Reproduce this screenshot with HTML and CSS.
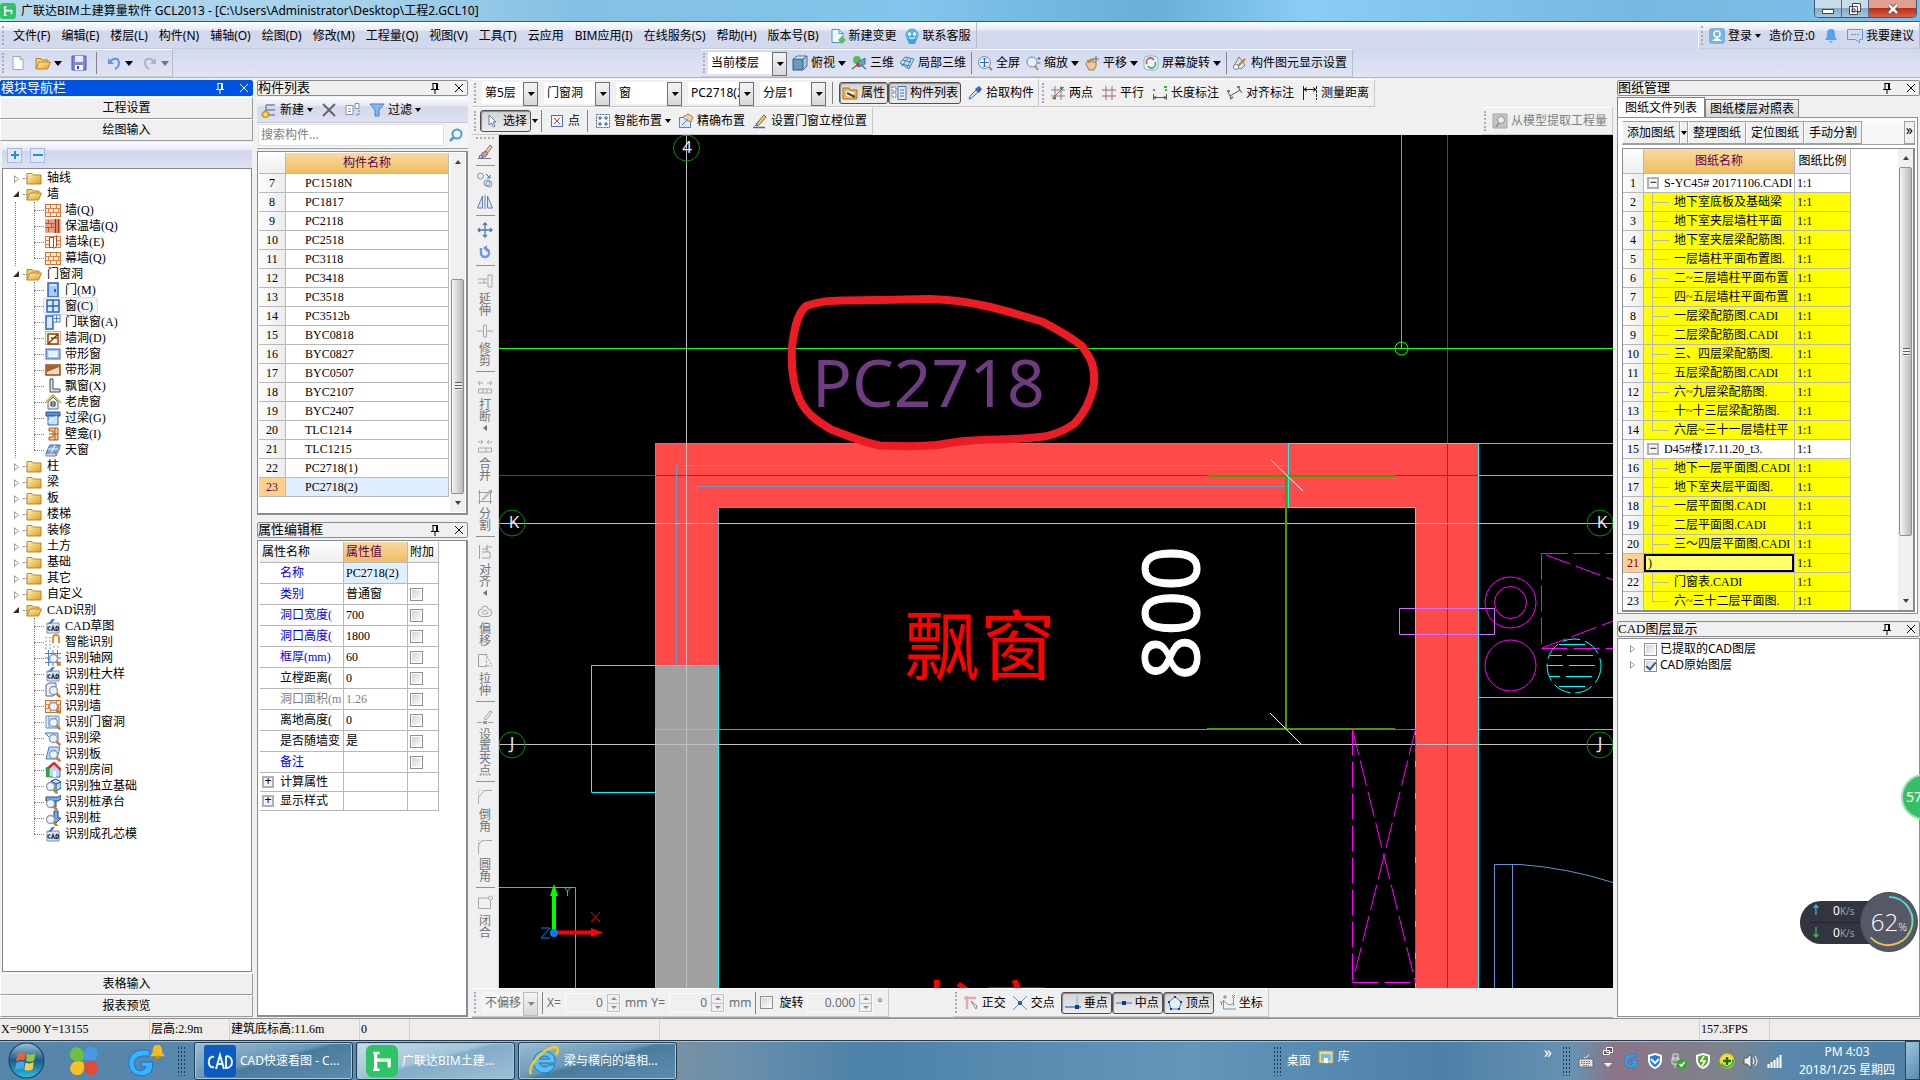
FILE: index.html
```html
<!DOCTYPE html>
<html lang="zh-CN">
<head>
<meta charset="utf-8">
<title>广联达BIM土建算量软件 GCL2013</title>
<link rel="stylesheet" href="styles.css">
</head>
<body>
<svg class="defs" aria-hidden="true">
<defs>
<linearGradient id="gFold" x1="0" y1="0" x2="1" y2="1"><stop offset="0" stop-color="#fff3b0"/><stop offset="1" stop-color="#e0a020"/></linearGradient>
<linearGradient id="gOrb" x1="0" y1="0" x2="0" y2="1"><stop offset="0" stop-color="#9fc4dc"/><stop offset=".5" stop-color="#1d5a86"/><stop offset="1" stop-color="#2fc0e8"/></linearGradient>
<linearGradient id="gArc" x1="0" y1="0" x2="0" y2="1"><stop offset="0" stop-color="#3fe0e8"/><stop offset=".6" stop-color="#7ee08a"/><stop offset="1" stop-color="#f0c040"/></linearGradient>
<g id="mag"><path d="M11.5 11.5l3 3" stroke="#c9802c" stroke-width="2.6" stroke-linecap="round"/><circle cx="8.500" cy="8.500" r="4" fill="#eaf6ff" stroke="#8b98a8" stroke-width="1.300"/></g>
<symbol id="fold" viewBox="0 0 16 16"><path d="M1 3.500h5l1 1.500h8v9H1z" fill="url(#gFold)" stroke="#b8862b"/></symbol>
<symbol id="foldo" viewBox="0 0 16 16"><path d="M1 14V3.500h5l1 1.500h6v2" fill="#f3cf68" stroke="#b8862b"/><path d="M1 14l3-7h11.500l-3 7z" fill="url(#gFold)" stroke="#b8862b"/></symbol>
<symbol id="wall" viewBox="0 0 16 16"><rect x=".5" y="2.500" width="15" height="12" fill="#fff0d8" stroke="#d07030"/><path d="M0 6.500h16M0 10.500h16M5.500 3v3M11.500 3v3M3.500 7v3M8.500 7v3M13.500 7v3M5.500 11v3M11.500 11v3" stroke="#e08048"/></symbol>
<symbol id="wall2" viewBox="0 0 16 16"><rect x=".5" y="1.500" width="15" height="13" fill="#e8a080" stroke="#e8b0a0"/><path d="M0 5.500h9M0 9.500h9M3.500 2v3M6.500 6v3M3.500 10v4" stroke="#c05838"/><path d="M10.500 1v14M13.500 1v14" stroke="#a03818" stroke-width="1.500"/></symbol>
<symbol id="pier" viewBox="0 0 16 16"><rect x=".5" y="2.500" width="15" height="11" fill="#fff0d8" stroke="#e08048"/><path d="M0 6.500h5M0 10.500h5M11 6.500h5M11 10.500h5" stroke="#e08048"/><path d="M4.500 3.500h4v10h-4zM8.500 3.500l3-2v11l-3 2" fill="#fff" stroke="#b04a18"/></symbol>
<symbol id="door" viewBox="0 0 16 16"><rect x="3" y="1" width="10" height="14" fill="#a8cdf8" stroke="#2a60c8" stroke-width="1.500"/><path d="M10 7v3" stroke="#103a90" stroke-width="1.500"/><path d="M5 3h6" stroke="#fff"/></symbol>
<symbol id="win" viewBox="0 0 16 16"><rect x="2" y="2" width="12" height="12" fill="#d8ebff" stroke="#2a60c8" stroke-width="1.500"/><path d="M8 2v12M2 8h12" stroke="#2a60c8" stroke-width="1.500"/></symbol>
<symbol id="dwin" viewBox="0 0 16 16"><rect x="1" y="2" width="7" height="13" fill="#d8ebff" stroke="#2a60c8" stroke-width="1.500"/><rect x="8" y="1" width="7" height="7" fill="#fff" stroke="#4a80e0"/><path d="M11.500 1v7M8 4.500h7" stroke="#4a80e0"/></symbol>
<symbol id="hole" viewBox="0 0 16 16"><rect x=".5" y="1.500" width="15" height="13" fill="#fff0d8" stroke="#e0a888"/><path d="M3 4h10v10H3zM3 14L13 4M6 8h6" fill="#fff" stroke="#904010" stroke-width="1.500"/></symbol>
<symbol id="swin" viewBox="0 0 16 16"><rect x="1" y="3" width="14" height="10" fill="#9cc0f8" stroke="#3a6ad0"/><rect x="4" y="5.500" width="8" height="5" fill="#e8f2ff" stroke="#fff"/></symbol>
<symbol id="shole" viewBox="0 0 16 16"><rect x="1" y="3" width="14" height="10" fill="#f8dcb8" stroke="#904818" stroke-width="1.500"/><path d="M2 10l12-5v-1H2z" fill="#a86030"/></symbol>
<symbol id="bay" viewBox="0 0 16 16"><path d="M5 1h3v10h7v3H5z" fill="#d8dce4" stroke="#404858"/></symbol>
<symbol id="house" viewBox="0 0 16 16"><path d="M3 8v7h10V8L8 3z" fill="#e8f2f8" stroke="#487080"/><path d="M0 9l8-8 8 8" fill="none" stroke="#c0a830" stroke-width="1.500"/><path d="M6 8h4v4H6zM6 10h4" fill="#fff" stroke="#303030"/></symbol>
<symbol id="lintel" viewBox="0 0 16 16"><path d="M1 2h14v4H1z" fill="#5a90e0" stroke="#2050a0"/><path d="M3 6h10v9H3z" fill="#c8e0ff" stroke="#2a60c8"/><path d="M3 12l9-6" stroke="#fff"/></symbol>
<symbol id="niche" viewBox="0 0 16 16"><path d="M4 2h9v12H4v-3h4V5H4z" fill="#f8c890" stroke="#b05820"/><path d="M4 8h9M10 2v12" stroke="#b05820"/></symbol>
<symbol id="sky" viewBox="0 0 16 16"><path d="M5 3h10l-4 8H1z" fill="#78a8f0" stroke="#2a60c8"/><path d="M1 11h10v3H1zM11 11l4-8v3l-4 8z" fill="#d0d4d8" stroke="#888"/><path d="M10 3L6 11M3 7h10" stroke="#fff"/></symbol>
<symbol id="cad" viewBox="0 0 16 16"><path d="M2 5h12v10H2z" fill="#e0e8f4" stroke="#7890b0"/><path d="M3 6l4-5h3L6 6" fill="#3a80d8"/><path d="M5.500 9C2 8 2 13 5.500 12M6.500 13L8 8.500 9.500 13M11 8.500v4c3.500 0 3.500-4 0-4" fill="none" stroke="#183050" stroke-width="1.300"/></symbol>
<symbol id="smart" viewBox="0 0 16 16"><path d="M1 3v12M5 3v12M9 12v3M13 12v3" stroke="#3a80d8" stroke-dasharray="1.500 2"/><path d="M8 9V4a3 3 0 0 1 6 0v5" fill="none" stroke="#e09020" stroke-width="2"/></symbol>
<symbol id="raxis" viewBox="0 0 16 16"><path d="M0 3.500h16M0 8h16M0 12.500h16M3.500 0v16M8 0v16M12.500 0v16" stroke="#4a80d0"/><use href="#mag"/></symbol>
<symbol id="rcol" viewBox="0 0 16 16"><path d="M1 3l3-2h7v11l-3 2H1z" fill="#f0f0fc" stroke="#5060b0"/><use href="#mag"/></symbol>
<symbol id="rwall" viewBox="0 0 16 16"><use href="#wall"/><use href="#mag"/></symbol>
<symbol id="rwin" viewBox="0 0 16 16"><path d="M1 2h13v12H1zM4 2v12M11 2v12" fill="#e0eeff" stroke="#5a90d8"/><use href="#mag"/></symbol>
<symbol id="rbeam" viewBox="0 0 16 16"><path d="M0 3h13v8H5V8z" fill="#e0eeff" stroke="#3a70d0"/><use href="#mag"/></symbol>
<symbol id="rslab" viewBox="0 0 16 16"><path d="M4 1h11l-3 12H1z" fill="#b8dcf8" stroke="#3a80c8"/><use href="#mag"/></symbol>
<symbol id="rroom" viewBox="0 0 16 16"><path d="M4 7v8h11V7L9 2z" fill="#b8d8f8" stroke="#4070b0"/><path d="M1 8l8-7 7 7" fill="none" stroke="#d83030" stroke-width="2.500"/><path d="M2.500 5v10" stroke="#30a040" stroke-width="3"/><path d="M8 9h3v6H8z" fill="#fff"/></symbol>
<symbol id="rbase" viewBox="0 0 16 16"><path d="M6 3l5-2 5 3v6l-5 3-5-3zM6 3l5 3v7M11 6l5-2" fill="#b8dcf8" stroke="#1a4a90"/><g transform="translate(-3 0)"><use href="#mag"/></g></symbol>
<symbol id="rcap" viewBox="0 0 16 16"><path d="M1 3h12l3-2v4l-3 2H1zM7 7v6h4V7" fill="#78b0e8" stroke="#1a4a90"/><g transform="translate(-3 1)"><use href="#mag"/></g></symbol>
<symbol id="rpile" viewBox="0 0 16 16"><path d="M9 1h4v7h3l-5 5-5-5h3z" fill="#78a8e0" stroke="#1a4a90"/><g transform="translate(-3 1)"><use href="#mag"/></g></symbol>
<symbol id="pin" viewBox="0 0 10 12"><path d="M2.500 1.500h5M3 1v6M6.500 1v6M7.500 1v6M1 7.500h8M5 8v4" stroke="currentColor" fill="none"/></symbol>
<symbol id="x" viewBox="0 0 10 10"><path d="M1 1l8 8M9 1L1 9" stroke="currentColor"/></symbol>
<symbol id="doc" viewBox="0 0 16 16"><path d="M3 1.500h7l3 3v10H3z" fill="#fff" stroke="#a0a4b0"/><path d="M10 1.500v3h3" fill="none" stroke="#a0a4b0"/></symbol>
<symbol id="save" viewBox="0 0 16 16"><path d="M1 1h14v14H1z" fill="#8088d8" stroke="#5058b0"/><path d="M4 1h8v6H4z" fill="#e8e8ff"/><path d="M4 10h8v5H4z" fill="#fff"/><path d="M6 11h2v3H6z" fill="#404090"/></symbol>
<symbol id="undo" viewBox="0 0 16 16"><path d="M4 7c3-5 9-4 9 1 0 3-2 5-4 6" fill="none" stroke="currentColor" stroke-width="2"/><path d="M2 3v6h6z" fill="currentColor"/></symbol>
<symbol id="add" viewBox="0 0 16 16"><path d="M5 3h9M5 8h9M5 13h9M5 3v10" stroke="#7088a8" stroke-width="1.500"/><path d="M3 9h3v2h2v3H6v2H3v-2H1v-3h2z" fill="#ffd840" stroke="#b08010"/></symbol>
<symbol id="del" viewBox="0 0 16 16"><path d="M2 2l12 12M14 2L2 14" stroke="#606468" stroke-width="1.800"/></symbol>
<symbol id="copy" viewBox="0 0 16 16"><path d="M1 3.500h7v9H1zM3 7h3M3 9.500h3M10 1.500h4v5h-4z" fill="#fff" stroke="#8890a0"/><path d="M14 8v5h-4" fill="none" stroke="#5878c0" stroke-dasharray="2 1"/></symbol>
<symbol id="funnel" viewBox="0 0 16 16"><path d="M1 2h14L10 8v6H6V8z" fill="#88b4f0" stroke="#4a80c8"/></symbol>
<symbol id="cube" viewBox="0 0 16 16"><path d="M1 4h10v11H1z" fill="#6a98c0" stroke="#385878"/><path d="M1 4l4-3h10l-4 3z" fill="#d8f0ff" stroke="#507090"/><path d="M11 4l4-3v10l-4 4z" fill="#a8c8e0" stroke="#507090"/></symbol>
<symbol id="tri" viewBox="0 0 16 16"><circle cx="6" cy="5" r="4" fill="#58b858"/><path d="M6 8l8-5v6l-6 3z" fill="#70a0c8" stroke="#487090"/><path d="M1 14l5-4M15 14l-5-4" stroke="#507090" stroke-width="1.500"/><circle cx="7" cy="10" r="2" fill="#d04030"/></symbol>
<symbol id="part" viewBox="0 0 16 16"><path d="M1 8l5-6 9 2-5 10z" fill="#c8e4f8" stroke="#4880b0"/><path d="M4 5l8 2M3 11l6-8M8 13l4-9M2 9l9 2" stroke="#4880b0"/></symbol>
<symbol id="full" viewBox="0 0 16 16"><path d="M12 12l3 3" stroke="#c08030" stroke-width="2"/><circle cx="7.500" cy="7.500" r="6" fill="#e4f0fc" stroke="#7088a8"/><path d="M7.500 3v9M3 7.500h9M6 4.500L7.500 3 9 4.500M6 10.500L7.500 12 9 10.500" stroke="#3868b0" fill="none"/></symbol>
<symbol id="zoom" viewBox="0 0 16 16"><path d="M10 11l3 4" stroke="#c08030" stroke-width="2"/><circle cx="7" cy="7" r="5" fill="#e4f0fc" stroke="#7088a8"/><path d="M14 2v3M12.500 3.500h3M12.500 8h3" stroke="#3868b0"/></symbol>
<symbol id="hand" viewBox="0 0 16 16"><path d="M2 9l2-4 1 3V5h2v2-3h2v3h3v4l-2 4H5z" fill="#f0c898" stroke="#a87838"/><path d="M12 1v6M9 4h6" stroke="#606c80"/></symbol>
<symbol id="rot" viewBox="0 0 16 16"><rect x="1" y="1" width="14" height="14" rx="4" fill="#e8f6ff" stroke="#80b8d8"/><path d="M4 9a4 4 0 0 1 7-4" fill="none" stroke="#e05040" stroke-width="1.800"/><path d="M12 7a4 4 0 0 1-7 4" fill="none" stroke="#50b050" stroke-width="1.800"/></symbol>
<symbol id="disp" viewBox="0 0 16 16"><path d="M2 11l5-9 6 8-4 4z" fill="#d8e8f8" stroke="#6080a0"/><path d="M5 12l8-8" stroke="#c08030" stroke-width="2"/><circle cx="4" cy="12" r="2.500" fill="#fff" stroke="#708090"/></symbol>
<symbol id="prop" viewBox="0 0 16 16"><path d="M1 3h6l1 2h7v9H1z" fill="#f8b050" stroke="#b07020"/><path d="M4 6l8 1-1 5-7-1z" fill="#fff"/><path d="M5 8l8 4" stroke="#404040" stroke-width="2"/></symbol>
<symbol id="list" viewBox="0 0 16 16"><path d="M1 2h4v4H1zM1 8h4v4H1z" fill="#fff" stroke="#406090" stroke-dasharray="1.500 1"/><path d="M7 1.500h8v13H7z" fill="#e4ecfa" stroke="#4870b0"/><path d="M9 5h4M9 8h4M9 11h4" stroke="#4870b0"/></symbol>
<symbol id="pick" viewBox="0 0 16 16"><path d="M2 14l1-3 6-6 2 2-6 6z" fill="#c8e0f8" stroke="#4878b0"/><path d="M8 4l4 4 3-4-3-3z" fill="#3868b0"/></symbol>
<symbol id="twop" viewBox="0 0 16 16"><path d="M1 5h14M1 11h14M5 1v14M11 1v14" stroke="#7880a0"/><path d="M2 14L14 2" stroke="#c05050"/><path d="M3 13h3M10 3h3" stroke="#30a030" stroke-width="2"/></symbol>
<symbol id="para" viewBox="0 0 16 16"><path d="M1 5h14M1 11h14" stroke="#c05060"/><path d="M5 1v14M11 1v14" stroke="#7880a0"/></symbol>
<symbol id="len" viewBox="0 0 16 16"><path d="M1.500 9v6M14.500 9v6M2 12.500h12M4 11l-2 1.500L4 14M12 11l2 1.500-2 1.500" fill="none" stroke="#505860"/><path d="M1 5h2M12 2h3M14 4v2" stroke="#40b040" stroke-width="2"/></symbol>
<symbol id="align" viewBox="0 0 16 16"><path d="M1 7l3 6M11 2l4 6M3 11l10-6" stroke="#505860" fill="none"/><path d="M0 6h3M10 2h3M6 12l-3 2" stroke="#40a040" stroke-width="1.800"/></symbol>
<symbol id="meas" viewBox="0 0 16 16"><path d="M1.500 1v14" stroke="#202020"/><path d="M14.500 1v14" stroke="#202020" stroke-dasharray="3 1"/><path d="M2 4.500h12M5 2.500l-3 2 3 2M11 2.500l3 2-3 2" fill="none" stroke="#202020"/></symbol>
<symbol id="cursor" viewBox="0 0 16 16"><path d="M5 2v10l2.500-2 2 4 1.500-1-2-4h3z" fill="#fff" stroke="#5878a8"/></symbol>
<symbol id="pt" viewBox="0 0 16 16"><rect x="2.500" y="2.500" width="11" height="11" fill="#f0f4ff" stroke="#5070b0"/><path d="M5 5l6 6M11 5l-6 6" stroke="#c04050"/></symbol>
<symbol id="smartl" viewBox="0 0 16 16"><rect x="1.500" y="1.500" width="13" height="13" fill="#f4f8ff" stroke="#506080" stroke-dasharray="2 1"/><path d="M5 3v4M3 5h4M11 3v4M9 5h4M5 9v4M3 11h4M11 9v4M9 11h4" stroke="#405890"/></symbol>
<symbol id="prec" viewBox="0 0 16 16"><path d="M1.500 4.500h11v10h-11z" fill="#d8e8ff" stroke="#5880c0"/><path d="M5 4l5-3 5 3-2 5-5-2z" fill="#f4d0a0" stroke="#a88050"/><path d="M4 12l6-6" stroke="#5880c0"/></symbol>
<symbol id="pencil" viewBox="0 0 16 16"><path d="M5 10l7-8 2 2-7 8-3 1z" fill="#f0d070" stroke="#806030"/><path d="M1 14.500h12" stroke="#4070b0" stroke-width="1.500"/><path d="M3 13l4-5" stroke="#4070b0"/></symbol>
<symbol id="extr" viewBox="0 0 16 16"><path d="M1 1h14v14H1z" fill="#c4c4c4" stroke="#a8a8a8"/><circle cx="9" cy="7" r="3.500" fill="#eee" stroke="#909090"/><path d="M7 10l-3 4" stroke="#909090" stroke-width="1.500"/></symbol>
<symbol id="erase" viewBox="0 0 16 16"><path d="M1 14.500h13" stroke="#707888"/><path d="M8 8l5-7 2 2-5 7z" fill="#f0d890" stroke="#907850"/><path d="M5 9l4-2 2 3-3 3H4z" fill="#e090a0" stroke="#6070a0"/><path d="M3 11l3 2-1 1H2z" fill="#e8f0ff" stroke="#6070a0"/></symbol>
<symbol id="vcopy" viewBox="0 0 16 16"><circle cx="3.500" cy="4" r="3" fill="none" stroke="#8090a8"/><circle cx="12" cy="12" r="3" fill="none" stroke="#8090a8"/><circle cx="10" cy="11" r="3" fill="none" stroke="#8090a8"/><path d="M9 2l4 4M13 3v3h-3" stroke="#4070b0" fill="none"/></symbol>
<symbol id="mirr" viewBox="0 0 16 16"><path d="M5.500 2v12H.5zM10.500 2v12h5z" fill="#dce8f8" stroke="#6080b0"/><path d="M8 1v14" stroke="#6080b0"/></symbol>
<symbol id="move" viewBox="0 0 16 16"><path d="M8 1v14M1 8h14M6 3l2-2 2 2M6 13l2 2 2-2M3 6L1 8l2 2M13 6l2 2-2 2" fill="none" stroke="#5078a8" stroke-width="1.300"/></symbol>
<symbol id="spin" viewBox="0 0 16 16"><path d="M4 4v5a4 4 0 0 0 8 0 4 4 0 0 0-3-4" fill="none" stroke="#6a98e0" stroke-width="2.400"/><path d="M10 1v7L6 4z" fill="#6a98e0"/></symbol>
<symbol id="v1" viewBox="0 0 16 16"><path d="M1 6h6v4H1M11 2h4v12h-4zM7 6h3M7 10h3" fill="none" stroke="#a8a8a8"/></symbol>
<symbol id="v2" viewBox="0 0 16 16"><path d="M0 8h6M10 8h6M6.500 2h3v12h-3z" fill="none" stroke="#a8a8a8"/></symbol>
<symbol id="v3" viewBox="0 0 16 16"><path d="M1 4h5M10 4h5M3 2L1 4l2 2M13 2l2 2-2 2M1.500 10h13v4h-13zM6 10v4M10 10v4" fill="none" stroke="#a8a8a8"/></symbol>
<symbol id="v4" viewBox="0 0 16 16"><path d="M1 4h5M10 4h5M4 2l2 2-2 2M12 2l-2 2 2 2M1.500 10h13v4h-13zM9 10v4" fill="none" stroke="#a8a8a8"/></symbol>
<symbol id="v5" viewBox="0 0 16 16"><path d="M1 4.500h14M1 13.500h14M2.500 2v14M13.500 2v14M5 12l8-10 2 1-8 8z" fill="none" stroke="#a0a0a0"/></symbol>
<symbol id="v6" viewBox="0 0 16 16"><path d="M2.500 1v14M5 8h8v6H5M5 5h5v3M9 3h6M11 1L9 3l2 2" fill="none" stroke="#a0a0a0"/></symbol>
<symbol id="v7" viewBox="0 0 16 16"><path d="M5 6a3 3 0 0 1 6 0 3.500 3.500 0 1 1 0 7.500H5A3.500 3.500 0 1 1 5 6z" fill="none" stroke="#a0a0a0"/><path d="M7 8a1 1 0 0 1 2 0c3 1 2 3 0 3H7c-2 0-3-2 0-3z" fill="none" stroke="#a0a0a0"/></symbol>
<symbol id="v8" viewBox="0 0 16 16"><path d="M10 1.500H1.500v12H10" fill="none" stroke="#a0a0a0"/><path d="M9.500 1v12M10 3l5 10H8" fill="none" stroke="#a0a0a0" stroke-dasharray="2 1.500"/></symbol>
<symbol id="v9" viewBox="0 0 16 16"><path d="M7 10l6-8 2 1-6 8zM0 13.500h5M11 13.500h5" fill="none" stroke="#a0a0a0"/><path d="M6 12h4v3H6z" fill="#999"/></symbol>
<symbol id="v10" viewBox="0 0 16 16"><path d="M1.500 15V8l6-6.500H15" fill="none" stroke="#a8a8a8"/><path d="M1.500 8V1.500h6" fill="none" stroke="#bbb" stroke-dasharray="1.500 1.500"/></symbol>
<symbol id="v11" viewBox="0 0 16 16"><path d="M1.500 15V9q0-7.500 7-7.500H15" fill="none" stroke="#a8a8a8"/><path d="M1.500 8V1.500h6" fill="none" stroke="#bbb" stroke-dasharray="1.500 1.500"/></symbol>
<symbol id="v12" viewBox="0 0 16 16"><path d="M12 3H1.500v10.500h12V6" fill="none" stroke="#a8a8a8"/><circle cx="13.500" cy="3" r="2" fill="none" stroke="#a8a8a8"/></symbol>
<symbol id="ortho" viewBox="0 0 16 16"><path d="M1 3h12M4 1v13" stroke="#e8a8a8" stroke-width="2.500"/><path d="M8 6l5 8 1-3z" fill="#fff" stroke="#888"/></symbol>
<symbol id="cross" viewBox="0 0 16 16"><path d="M1 1l14 14M15 1L1 15" stroke="#5a90d0"/><path d="M6 6h4v4H6z" fill="#2a60b0"/></symbol>
<symbol id="perp" viewBox="0 0 16 16"><path d="M0 12h16" stroke="#3a80d0" stroke-width="1.500"/><path d="M12 1v11" stroke="#7ab0e8"/><path d="M10 10h4v4h-4z" fill="#103a90"/></symbol>
<symbol id="mid" viewBox="0 0 16 16"><path d="M0 8h16" stroke="#5a98d8" stroke-width="1.500"/><path d="M6 6h4v4H6z" fill="#103a90"/></symbol>
<symbol id="vert" viewBox="0 0 16 16"><path d="M8 2l6.500 5L12 14H4L1.500 7z" fill="#e4f0ff" stroke="#3a80d0"/><path d="M7 1h2v2H7zM13 6h2v2h-2zM11 13h2v2h-2zM3 13h2v2H3zM1 6h2v2H1z" fill="#103a90"/></symbol>
<symbol id="coord" viewBox="0 0 16 16"><path d="M3.500 5v9H16M3.500 5c3 5 7 6 10 3M13.500 3v8" fill="none" stroke="#6a98c8"/><path d="M4 1h2v2H4zM12 0l3 3M15 0l-3 3M0 6l1.500 2L3 6M1.500 8v2" fill="none" stroke="#888"/></symbol>
<symbol id="newc" viewBox="0 0 16 16"><path d="M2 1.500h7l4 4v9H2z" fill="#eef8ff" stroke="#5090d0"/><path d="M9 1.500v4h4" fill="none" stroke="#5090d0"/><path d="M12 8l4 4-4 4-4-4z" fill="#60c050"/></symbol>
<symbol id="svc" viewBox="0 0 16 16"><circle cx="8" cy="7" r="6.500" fill="#50b0f0"/><path d="M3 11l2 5h6l2-5z" fill="#40a0e0"/><circle cx="5.500" cy="6" r="1.700" fill="#fff"/><circle cx="10.500" cy="6" r="1.700" fill="#fff"/><path d="M5 9.500q3 2.500 6 0" stroke="#fff" fill="none"/></symbol>
<symbol id="user" viewBox="0 0 16 16"><rect width="16" height="16" rx="3" fill="#78b4dc"/><circle cx="8" cy="6" r="3" fill="none" stroke="#fff" stroke-width="1.500"/><path d="M3 13q5-6 10 0z" fill="#fff"/></symbol>
<symbol id="bell" viewBox="0 0 16 16"><path d="M8 1c4 0 4 3 4 6s1 3 2 5H2c1-2 2-2 2-5s0-6 4-6z" fill="#58a0f0"/><path d="M6 13h4l-2 2z" fill="#58a0f0"/></symbol>
<symbol id="chat" viewBox="0 0 16 16"><path d="M.5 1.500h15v10h-3v3l-4-3h-8z" fill="none" stroke="#5a98e8"/><path d="M4 6.500h8" stroke="#5a98e8" stroke-dasharray="2 1"/></symbol>
<symbol id="find" viewBox="0 0 16 16"><circle cx="9" cy="7" r="4.500" fill="none" stroke="#48a0d8" stroke-width="2"/><path d="M5.500 10.500L2 14" stroke="#48a0d8" stroke-width="2.500"/></symbol>
<symbol id="h" viewBox="0 0 40 40"><rect width="40" height="40" rx="8" fill="#2ec466"/><path d="M12 9v23M12 19h18M29 17v11" stroke="#fff" stroke-width="4" fill="none"/><path d="M9 10h8M9 31h8" stroke="#fff" stroke-width="3"/></symbol>
<symbol id="g" viewBox="0 0 32 32"><path d="M25 3C10 0 2 8 3 18c1 10 12 14 20 10 5-3 5-8 5-13H16v5h5c-1 5-10 6-12 0C7 12 12 7 25 9z" fill="#2aa8f0" stroke="#1070c8"/></symbol>
</defs>
</svg>

<header class="titlebar">
<svg class="i"><use href="#h"/></svg><h1>广联达BIM土建算量软件 GCL2013 - [C:\Users\Administrator\Desktop\工程2.GCL10]</h1>
<div class="wctl"><button aria-label="最小化"><svg viewBox="0 0 14 12"><rect x="1.500" y="6.500" width="11" height="4" fill="#fff" stroke="#445"/></svg></button><button aria-label="还原"><svg viewBox="0 0 14 12"><path d="M4.500.5h8v8h-8zM1.500 3.500h8v8h-8zM4 6h3v3H4z" fill="#fff" stroke="#445"/></svg></button><button class="close" aria-label="关闭"><svg viewBox="0 0 14 12"><path d="M3 2l8 8M11 2l-8 8" stroke="#534" stroke-width="4"/><path d="M3 2l8 8M11 2l-8 8" stroke="#fff" stroke-width="2.500"/></svg></button></div>
</header>

<nav class="menubar">
<div class="bar menus"><button>文件(F)</button><button>编辑(E)</button><button>楼层(L)</button><button>构件(N)</button><button>辅轴(O)</button><button>绘图(D)</button><button>修改(M)</button><button>工程量(Q)</button><button>视图(V)</button><button>工具(T)</button><button>云应用</button><button>BIM应用(I)</button><button>在线服务(S)</button><button>帮助(H)</button><button>版本号(B)</button><button><svg class="i"><use href="#newc"/></svg>新建变更</button><button><svg class="i"><use href="#svc"/></svg>联系客服</button></div>
<div class="bar account"><button><svg class="i"><use href="#user"/></svg>登录<i class="dd"></i></button><span>造价豆:0</span><button aria-label="通知"><svg class="i"><use href="#bell"/></svg></button><button><svg class="i"><use href="#chat"/></svg>我要建议</button></div>
</nav>

<div class="toolbar">
<div class="bar file"><button aria-label="新建"><svg class="i"><use href="#doc"/></svg></button><button aria-label="打开"><svg class="i"><use href="#foldo"/></svg><i class="dd"></i></button><button aria-label="保存"><svg class="i"><use href="#save"/></svg></button><i class="sep"></i><button class="blue" aria-label="撤销"><svg class="i"><use href="#undo"/></svg><i class="dd"></i></button><button class="redo" aria-label="重做"><svg class="i"><use href="#undo"/></svg><i class="dd"></i></button></div>
<div class="bar view"><label class="sel w80"><select aria-label="楼层范围"><option>当前楼层</option></select></label><button><svg class="i"><use href="#cube"/></svg>俯视<i class="dd"></i></button><button><svg class="i"><use href="#tri"/></svg>三维</button><button><svg class="i"><use href="#part"/></svg>局部三维</button><i class="sep"></i><button><svg class="i"><use href="#full"/></svg>全屏</button><button><svg class="i"><use href="#zoom"/></svg>缩放<i class="dd"></i></button><button><svg class="i"><use href="#hand"/></svg>平移<i class="dd"></i></button><button><svg class="i"><use href="#rot"/></svg>屏幕旋转<i class="dd"></i></button><i class="sep"></i><button><svg class="i"><use href="#disp"/></svg>构件图元显示设置</button></div>
</div>

<main class="work">
<aside class="nav">
<h2 class="ptitle on">模块导航栏<svg class="pin"><use href="#pin"/></svg><svg class="px"><use href="#x"/></svg></h2>
<button class="module">工程设置</button><button class="module">绘图输入</button>
<div class="treebar"><button aria-label="展开"><svg viewBox="0 0 12 12"><path d="M6 2v8M2 6h8" stroke="#2090d0" stroke-width="2"/></svg></button><button aria-label="折叠"><svg viewBox="0 0 12 12"><path d="M1 6h10" stroke="#2090d0" stroke-width="2"/></svg></button></div>
<ul class="tree song">
<li class="shut"><span><svg class="i"><use href="#fold"/></svg>轴线</span></li>
<li class="open"><span><svg class="i"><use href="#foldo"/></svg>墙</span>
<ul class="thru"><li><svg class="i"><use href="#wall"/></svg>墙(Q)</li><li><svg class="i"><use href="#wall2"/></svg>保温墙(Q)</li><li><svg class="i"><use href="#pier"/></svg>墙垛(E)</li><li><svg class="i"><use href="#wall"/></svg>幕墙(Q)</li></ul></li>
<li class="open"><span><svg class="i"><use href="#foldo"/></svg>门窗洞</span>
<ul class="thru"><li><svg class="i"><use href="#door"/></svg>门(M)</li><li class="cur"><b><svg class="i"><use href="#win"/></svg>窗(C)</b></li><li><svg class="i"><use href="#dwin"/></svg>门联窗(A)</li><li><svg class="i"><use href="#hole"/></svg>墙洞(D)</li><li><svg class="i"><use href="#swin"/></svg>带形窗</li><li><svg class="i"><use href="#shole"/></svg>带形洞</li><li><svg class="i"><use href="#bay"/></svg>飘窗(X)</li><li><svg class="i"><use href="#house"/></svg>老虎窗</li><li><svg class="i"><use href="#lintel"/></svg>过梁(G)</li><li><svg class="i"><use href="#niche"/></svg>壁龛(I)</li><li><svg class="i"><use href="#sky"/></svg>天窗</li></ul></li>
<li class="shut"><span><svg class="i"><use href="#fold"/></svg>柱</span></li>
<li class="shut"><span><svg class="i"><use href="#fold"/></svg>梁</span></li>
<li class="shut"><span><svg class="i"><use href="#fold"/></svg>板</span></li>
<li class="shut"><span><svg class="i"><use href="#fold"/></svg>楼梯</span></li>
<li class="shut"><span><svg class="i"><use href="#fold"/></svg>装修</span></li>
<li class="shut"><span><svg class="i"><use href="#fold"/></svg>土方</span></li>
<li class="shut"><span><svg class="i"><use href="#fold"/></svg>基础</span></li>
<li class="shut"><span><svg class="i"><use href="#fold"/></svg>其它</span></li>
<li class="shut"><span><svg class="i"><use href="#fold"/></svg>自定义</span></li>
<li class="open"><span><svg class="i"><use href="#foldo"/></svg>CAD识别</span>
<ul><li><svg class="i"><use href="#cad"/></svg>CAD草图</li><li><svg class="i"><use href="#smart"/></svg>智能识别</li><li><svg class="i"><use href="#raxis"/></svg>识别轴网</li><li><svg class="i"><use href="#cad"/></svg>识别柱大样</li><li><svg class="i"><use href="#rcol"/></svg>识别柱</li><li><svg class="i"><use href="#rwall"/></svg>识别墙</li><li><svg class="i"><use href="#rwin"/></svg>识别门窗洞</li><li><svg class="i"><use href="#rbeam"/></svg>识别梁</li><li><svg class="i"><use href="#rslab"/></svg>识别板</li><li><svg class="i"><use href="#rroom"/></svg>识别房间</li><li><svg class="i"><use href="#rbase"/></svg>识别独立基础</li><li><svg class="i"><use href="#rcap"/></svg>识别桩承台</li><li><svg class="i"><use href="#rpile"/></svg>识别桩</li><li><svg class="i"><use href="#cad"/></svg>识别成孔芯模</li></ul></li>
</ul>
<button class="module">表格输入</button><button class="module">报表预览</button>
</aside>

<aside class="parts">
<h2 class="ptitle">构件列表<svg class="pin"><use href="#pin"/></svg><svg class="px"><use href="#x"/></svg></h2>
<div class="ptools"><button><svg class="i"><use href="#add"/></svg>新建<i class="dd"></i></button><button aria-label="删除"><svg class="i"><use href="#del"/></svg></button><button aria-label="复制"><svg class="i"><use href="#copy"/></svg></button><button><svg class="i"><use href="#funnel"/></svg>过滤<i class="dd"></i></button></div>
<div class="search"><input type="text" placeholder="搜索构件..." aria-label="搜索构件"><button aria-label="搜索"><svg class="i"><use href="#find"/></svg></button></div>
<div class="gridbox list">
<table class="grid song comps"><thead><tr><th></th><th class="hot">构件名称</th></tr></thead><tbody>
<tr><th>7</th><td>PC1518N</td></tr><tr><th>8</th><td>PC1817</td></tr><tr><th>9</th><td>PC2118</td></tr><tr><th>10</th><td>PC2518</td></tr><tr><th>11</th><td>PC3118</td></tr><tr><th>12</th><td>PC3418</td></tr><tr><th>13</th><td>PC3518</td></tr><tr><th>14</th><td>PC3512b</td></tr><tr><th>15</th><td>BYC0818</td></tr><tr><th>16</th><td>BYC0827</td></tr><tr><th>17</th><td>BYC0507</td></tr><tr><th>18</th><td>BYC2107</td></tr><tr><th>19</th><td>BYC2407</td></tr><tr><th>20</th><td>TLC1214</td></tr><tr><th>21</th><td>TLC1215</td></tr><tr><th>22</th><td>PC2718(1)</td></tr><tr class="pick"><th>23</th><td>PC2718(2)</td></tr>
</tbody></table>
<div class="scroll low"><i class="up"></i><div class="thumb"></div><i class="down"></i></div>
</div>
<h2 class="ptitle second">属性编辑框<svg class="pin"><use href="#pin"/></svg><svg class="px"><use href="#x"/></svg></h2>
<div class="gridbox fill">
<table class="grid song props"><thead><tr><th>属性名称</th><th class="hot">属性值</th><th>附加</th></tr></thead><tbody>
<tr class="key"><td>名称</td><td class="lit">PC2718(2)</td><td></td></tr>
<tr class="key"><td>类别</td><td>普通窗</td><td><input type="checkbox" aria-label="附加类别"></td></tr>
<tr class="key"><td>洞口宽度(</td><td>700</td><td><input type="checkbox" aria-label="附加洞口宽度"></td></tr>
<tr class="key"><td>洞口高度(</td><td>1800</td><td><input type="checkbox" aria-label="附加洞口高度"></td></tr>
<tr class="key"><td>框厚(mm)</td><td>60</td><td><input type="checkbox" aria-label="附加框厚"></td></tr>
<tr><td>立樘距离(</td><td>0</td><td><input type="checkbox" aria-label="附加立樘距离"></td></tr>
<tr class="off"><td>洞口面积(m</td><td>1.26</td><td><input type="checkbox" aria-label="附加洞口面积"></td></tr>
<tr><td>离地高度(</td><td>0</td><td><input type="checkbox" aria-label="附加离地高度"></td></tr>
<tr><td>是否随墙变</td><td>是</td><td><input type="checkbox" aria-label="附加是否随墙变"></td></tr>
<tr class="key"><td>备注</td><td></td><td><input type="checkbox" aria-label="附加备注"></td></tr>
<tr class="grp"><td><button class="tog" aria-label="展开">+</button>计算属性</td><td></td><td></td></tr>
<tr class="grp"><td><button class="tog" aria-label="展开">+</button>显示样式</td><td></td><td></td></tr>
</tbody></table>
</div>
</aside>

<section class="center">
<div class="row">
<div class="bar pickbar"><label class="sel w54"><select aria-label="楼层"><option>第5层</option></select></label><label class="sel w66"><select aria-label="构件类型"><option>门窗洞</option></select></label><label class="sel w66"><select aria-label="构件"><option>窗</option></select></label><label class="sel w66"><select aria-label="构件名称"><option>PC2718(2)</option></select></label><label class="sel w66"><select aria-label="分层"><option>分层1</option></select></label><i class="sep"></i><button class="down"><svg class="i"><use href="#prop"/></svg>属性</button><button class="down"><svg class="i"><use href="#list"/></svg>构件列表</button><button><svg class="i"><use href="#pick"/></svg>拾取构件</button></div>
<div class="bar"><button><svg class="i"><use href="#twop"/></svg>两点</button><button><svg class="i"><use href="#para"/></svg>平行</button><button><svg class="i"><use href="#len"/></svg>长度标注</button><button><svg class="i"><use href="#align"/></svg>对齐标注</button><button><svg class="i"><use href="#meas"/></svg>测量距离</button></div>
</div>
<div class="row">
<div class="bar draw"><button class="down"><svg class="i"><use href="#cursor"/></svg>选择</button><i class="dd"></i><i class="sep"></i><button><svg class="i"><use href="#pt"/></svg>点</button><i class="sep"></i><button><svg class="i"><use href="#smartl"/></svg>智能布置<i class="dd"></i></button><button><svg class="i"><use href="#prec"/></svg>精确布置</button><button><svg class="i"><use href="#pencil"/></svg>设置门窗立樘位置</button></div>
<div class="bar push"><button disabled><svg class="i"><use href="#extr"/></svg>从模型提取工程量</button></div>
</div>
<div class="stage">
<div class="vbar"><button aria-label="删除"><svg class="i"><use href="#erase"/></svg></button><hr><button aria-label="复制"><svg class="i"><use href="#vcopy"/></svg></button><button aria-label="镜像"><svg class="i"><use href="#mirr"/></svg></button><hr><button aria-label="移动"><svg class="i"><use href="#move"/></svg></button><button aria-label="旋转"><svg class="i"><use href="#spin"/></svg></button><hr>
<button class="t"><svg class="i"><use href="#v1"/></svg>延伸</button><button class="t"><svg class="i"><use href="#v2"/></svg>修剪</button><hr><button class="t"><svg class="i"><use href="#v3"/></svg>打断<i></i></button><button class="t"><svg class="i"><use href="#v4"/></svg>合并</button><button class="t"><svg class="i"><use href="#v5"/></svg>分割</button><hr><button class="t"><svg class="i"><use href="#v6"/></svg>对齐<i></i></button><button class="t"><svg class="i"><use href="#v7"/></svg>偏移</button><button class="t"><svg class="i"><use href="#v8"/></svg>拉伸</button><hr><button class="t"><svg class="i"><use href="#v9"/></svg>设置夹点</button><hr><button class="t"><svg class="i"><use href="#v10"/></svg>倒角</button><button class="t"><svg class="i"><use href="#v11"/></svg>圆角</button><hr><button class="t"><svg class="i"><use href="#v12"/></svg>闭合</button></div>
<svg class="drawing" viewBox="499 135 1114 853" preserveAspectRatio="xMidYMid slice" fill="none">
<path d="M655 443H1479V988H1416V508H719V666H655z" fill="#ff4a4a"/>
<path d="M655 665h64v323h-64z" fill="#a0a0a0"/>
<path d="M499 475.500H1478M1447.500 135V988" stroke="#3c4a82"/>
<path d="M1478 443.500h135M1478 475.500h135M1478 697.500h135M1478 729.500h135" stroke="#ff8c69"/>
<path d="M655.500 665V443.500H1288M718.500 665V507.500H1288M676.500 665V465.500H1288M697.500 665V486.500H1288M718 729.500H1415" stroke="#6699cc"/>
<path d="M1288.500 507.500V443.500H1478.500V988M1288 507.500H1415.500V988M655 665.500H591.500V792.500H655M655 665.500H718.500V988M718 729.500H655.500V988" stroke="#00ffff"/>
<path d="M499 348.500H1613M1401.500 135V348M499 887.500H575.500V988" stroke="#00ff00"/>
<circle cx="1401.500" cy="348.500" r="6.500" stroke="#00ff00"/>
<path d="M686.500 135V988M499 523.500H1613M499 744.500H1613" stroke="#c0c0c0"/>
<g stroke="#0a8a0a"><circle cx="686.500" cy="148" r="13"/><circle cx="512" cy="523" r="13"/><circle cx="1600" cy="523" r="13"/><circle cx="512" cy="745" r="13"/><circle cx="1600" cy="745" r="13"/></g>
<g class="axis"><text x="687" y="153">4</text><text x="514" y="528">K</text><text x="1602" y="528">K</text><text x="512" y="749">J</text><text x="1600" y="749">J</text></g>
<path d="M1207 476H1395M1286 476V729M1207 729H1395" stroke="#4b9a00" stroke-width="2"/>
<path d="M1271 460l32 31M1270 713l31 31" stroke="#fff"/>
<path d="M1399.500 608.500h95v26h-95z" stroke="#d070ff"/>
<g stroke="#ff00ff"><circle cx="1510.500" cy="602.500" r="25.500"/><circle cx="1510.500" cy="602.500" r="16"/><circle cx="1510.500" cy="665.500" r="25.500"/>
<path d="M1541.500 553.500H1613M1541.500 553.500V648.500M1541.500 648.500H1613M1546 555L1613 580M1542 648L1613 621M1352.500 729.500V982.500M1352.500 729.500H1415M1415.500 735V982.500M1352.500 982.500H1415M1352.500 729.500L1415.500 982.500M1415.500 729.500L1352.500 982.500" stroke-dasharray="26 6"/></g>
<g stroke="#00ffff"><circle cx="1574" cy="666" r="27" stroke-dasharray="18 5"/><path d="M1559 644.500h26M1550 655.500h12M1567 655.500h26M1547 665.500h16M1569 665.500h26M1549 676.500h11M1566 676.500h26M1559 686.500h26"/></g>
<path d="M1494.500 988V864.500H1520Q1568 868 1613 882.500M1512.500 865V988" stroke="#5f93d6"/>
<path d="M554 932V893" stroke="#00ff00" stroke-width="4"/><path d="M550 896l4-12 4 12z" fill="#00ff00"/>
<path d="M554 932.500H593" stroke="#ff0000" stroke-width="4"/><path d="M591 928l12 4.500-12 4.500z" fill="#ff0000"/>
<circle cx="554" cy="933" r="4" fill="#0080ff"/>
<path d="M564 887l3.500 4 3.500-4M567.500 891v5" stroke="#00ff00"/><path d="M591 912l9 10M600 912l-9 10" stroke="#ff0000"/><path d="M541 928h9l-9 10h9" stroke="#0080ff"/>
<text class="tag" x="812" y="407">PC2718</text>
<text class="room" x="904" y="674">飘窗</text><text class="room" x="902" y="1044">书房</text>
<text class="dim" transform="translate(1199 680) rotate(-90)">800</text>
<path d="M806 306C820 301 830 301 845 300.500L880 300 930 299C975 300 1010 312 1043 322C1062 332 1072 338 1082 346C1092 360 1095 367 1094 384C1090 405 1082 416 1074 424C1062 432 1052 436 1040 437C1010 441 985 438 957 442C925 448 900 446 880 445.500C860 442 850 436 832 430C815 420 805 412 799 398C792 382 791 365 792 347C794 330 797 314 806 306z" stroke="#ed1c24" stroke-width="8" stroke-linejoin="round"/>
</svg>
</div>
<div class="row foot">
<div class="bar offs"><label class="sel w54 dis"><select disabled aria-label="偏移方式"><option>不偏移</option></select></label><i class="sep"></i><label class="num">X=<input disabled value="0"><i></i></label>mm<label class="num">Y=<input disabled value="0"><i></i></label>mm<i class="sep"></i><label class="chk"><input type="checkbox">旋转</label><label class="num wide"><input disabled value="0.000" aria-label="旋转角度"><i></i></label>°</div>
<div class="bar snap"><button><svg class="i"><use href="#ortho"/></svg>正交</button><button><svg class="i"><use href="#cross"/></svg>交点</button><button class="down"><svg class="i"><use href="#perp"/></svg>垂点</button><button class="down"><svg class="i"><use href="#mid"/></svg>中点</button><button class="down"><svg class="i"><use href="#vert"/></svg>顶点</button><button><svg class="i"><use href="#coord"/></svg>坐标</button></div>
</div>
</section>

<aside class="sheets">
<h2 class="ptitle">图纸管理<svg class="pin"><use href="#pin"/></svg><svg class="px"><use href="#x"/></svg></h2>
<div class="tabs song"><button class="sel-tab">图纸文件列表</button><button>图纸楼层对照表</button></div>
<div class="tabbox">
<div class="sheetbar"><button>添加图纸</button><button class="ar" aria-label="更多添加方式"><i class="dd"></i></button><button>整理图纸</button><button>定位图纸</button><button>手动分割</button><button class="more">»</button></div>
<div class="gridbox files">
<table class="grid song sheet"><thead><tr><th></th><th class="hot">图纸名称</th><th>图纸比例</th></tr></thead><tbody>
<tr class="root"><th>1</th><td><button class="tog" aria-label="折叠">−</button>S-YC45# 20171106.CADI</td><td>1:1</td></tr>
<tr><th>2</th><td>地下室底板及基础梁</td><td>1:1</td></tr>
<tr><th>3</th><td>地下室夹层墙柱平面</td><td>1:1</td></tr>
<tr><th>4</th><td>地下室夹层梁配筋图.</td><td>1:1</td></tr>
<tr><th>5</th><td>一层墙柱平面布置图.</td><td>1:1</td></tr>
<tr><th>6</th><td>二~三层墙柱平面布置</td><td>1:1</td></tr>
<tr><th>7</th><td>四~五层墙柱平面布置</td><td>1:1</td></tr>
<tr><th>8</th><td>一层梁配筋图.CADI</td><td>1:1</td></tr>
<tr><th>9</th><td>二层梁配筋图.CADI</td><td>1:1</td></tr>
<tr><th>10</th><td>三、四层梁配筋图.</td><td>1:1</td></tr>
<tr><th>11</th><td>五层梁配筋图.CADI</td><td>1:1</td></tr>
<tr><th>12</th><td>六~九层梁配筋图.</td><td>1:1</td></tr>
<tr><th>13</th><td>十~十三层梁配筋图.</td><td>1:1</td></tr>
<tr class="end"><th>14</th><td>六层~三十一层墙柱平</td><td>1:1</td></tr>
<tr class="root"><th>15</th><td><button class="tog" aria-label="折叠">−</button>D45#楼17.11.20_t3.</td><td>1:1</td></tr>
<tr><th>16</th><td>地下一层平面图.CADI</td><td>1:1</td></tr>
<tr><th>17</th><td>地下室夹层平面图.</td><td>1:1</td></tr>
<tr><th>18</th><td>一层平面图.CADI</td><td>1:1</td></tr>
<tr><th>19</th><td>二层平面图.CADI</td><td>1:1</td></tr>
<tr><th>20</th><td>三～四层平面图.CADI</td><td>1:1</td></tr>
<tr class="edit"><th>21</th><td>)</td><td>1:1</td></tr>
<tr><th>22</th><td>门窗表.CADI</td><td>1:1</td></tr>
<tr class="end"><th>23</th><td>六~三十二层平面图.</td><td>1:1</td></tr>
</tbody></table>
<div class="scroll high"><i class="up"></i><div class="thumb"></div><i class="down"></i></div>
</div>
</div>
<h2 class="ptitle second">CAD图层显示<svg class="pin"><use href="#pin"/></svg><svg class="px"><use href="#x"/></svg></h2>
<div class="layers"><label><i></i><input type="checkbox">已提取的CAD图层</label><label><i></i><input type="checkbox" checked>CAD原始图层</label></div>
</aside>
</main>

<footer class="status song"><span class="s1">X=9000 Y=13155</span><span class="s2">层高:2.9m</span><span class="s3">建筑底标高:11.6m</span><span class="s4">0</span><span class="s5"></span><span class="s6"></span><span class="s7">157.3FPS</span></footer>

<div class="taskbar">
<button class="orb" aria-label="开始"><svg viewBox="0 0 36 36"><circle cx="18" cy="18" r="17" fill="url(#gOrb)" stroke="#16405e"/><path d="M9 12q4-3 8-1l-1 7q-4-2-8 1z" fill="#f06030"/><path d="M18.500 11.500q4 2 8-.5l-1 7q-4 2-8 .5z" fill="#90c840"/><path d="M8 20.500q4-3 8-1l-1 7q-4-2-8 1z" fill="#40a8f0"/><path d="M17 20q4 2 8-.5l-1 7q-4 2-8 .5z" fill="#f8d040"/></svg></button>
<button class="quick" aria-label="应用"><svg viewBox="0 0 32 32"><path d="M15 15C8 18 0 15 1 8S10-1 14 4c2 3 2 7 1 11z" fill="#70c040"/><path d="M17 15C14 8 17 0 24 1s9 9 4 13c-3 2-7 2-11 1z" fill="#4898e8"/><path d="M15 17c3 7 0 15-7 14S-1 22 4 18c3-2 7-2 11-1z" fill="#f8c020"/><path d="M17 17c7-3 15 0 14 7s-9 9-13 4c-2-3-2-7-1-11z" fill="#e84838"/></svg></button>
<button class="quick" aria-label="浏览器"><svg viewBox="0 0 42 34"><g transform="translate(0 3)"><path d="M25 3C10 0 2 8 3 18c1 10 12 14 20 10 5-3 5-8 5-13H16v5h5c-1 5-10 6-12 0C7 12 12 7 25 9z" fill="#38b4ff" stroke="#1070d8"/></g><path d="M33 0c5 0 5 5 5 8l3 4H25l3-4c0-3 0-8 5-8z" fill="#f8b820"/><circle cx="33" cy="13" r="2" fill="#d89010"/></svg></button>
<i class="dots"></i>
<button class="task"><svg viewBox="0 0 32 32"><rect width="32" height="32" rx="3" fill="#0c5cc0"/><path d="M10 12C3 10 3 24 10 22M12 24l4-14 4 14M13 19h6M22 11v12c8 0 8-12 0-12" fill="none" stroke="#e8f4ff" stroke-width="2"/></svg>CAD快速看图 - C...</button>
<button class="task active"><svg viewBox="0 0 40 40"><use href="#h"/></svg>广联达BIM土建...</button>
<button class="task"><svg viewBox="0 0 32 32"><path d="M27 20A11 11 0 1 1 27 14V18H11A6 6 0 0 0 21 20zM11 14H22A6 5 0 0 0 11 14z" fill="#58c0f4" stroke="#1878c8"/><path d="M3 29C-1 22 14 4 27 2c4 0 3 5 1 8" fill="none" stroke="#f8c830" stroke-width="2.500"/></svg>梁与横向的墙相...</button>
<div class="tray"><i class="dots"></i><span class="desk">桌面</span><span class="lib"><svg class="i" viewBox="0 0 16 16"><path d="M1 2h14v12H1z" fill="#f4dc80" stroke="#b89840"/><path d="M3 5h10v7H3z" fill="#70c0e8"/><path d="M6 14V9h4v5z" fill="#fff"/></svg>库</span><span class="chev">»</span><i class="dots"></i>
<svg class="i" viewBox="0 0 16 16"><path d="M1 6h14v8H1z" fill="#e4e4e0" stroke="#667"/><path d="M3 8.500h10M3 10.500h10M5 12.500h6" stroke="#667" stroke-dasharray="1.500 1"/><path d="M6 5q5-1 5-4" stroke="#ddd" fill="none"/></svg>
<svg class="mini" viewBox="0 0 10 24"><path d="M3.500 1.500h6v5h-6zM.5 4.500h6v4h-6z" fill="#557" stroke="#fff"/><path d="M1 17h8l-4 4z" fill="#fff"/></svg>
<svg class="i"><use href="#g"/></svg>
<svg class="i" viewBox="0 0 16 16"><path d="M8 0l7 2v6q-1 6-7 8-6-2-7-8V2z" fill="#fff"/><path d="M8 2l5 1.500V8q-1 4-5 6-4-2-5-6V3.500z" fill="#2878e0"/><path d="M4 6l4 4 4-4" stroke="#fff" stroke-width="2" fill="none"/></svg>
<svg class="i" viewBox="0 0 16 16"><path d="M2 1h5v6H2zM1 5h7v6H1zM4 11v4" fill="#888" stroke="#ddd"/><circle cx="11" cy="11" r="5" fill="#30a830"/><path d="M8.500 11l2 2 3-4" stroke="#fff" stroke-width="1.500" fill="none"/></svg>
<svg class="i" viewBox="0 0 16 16"><path d="M8 0l7 2v6q-1 6-7 8-6-2-7-8V2z" fill="#fff"/><path d="M8 2l5 1.500V8q-1 4-5 6-4-2-5-6V3.500z" fill="#58a830"/><path d="M9 3L6 8h4l-3 5" stroke="#fff" stroke-width="1.500" fill="none"/></svg>
<svg class="i" viewBox="0 0 16 16"><circle cx="8" cy="8" r="7.500" fill="#f4d820"/><path d="M1 11a7.500 7.500 0 0 0 14-5" fill="#40b040"/><circle cx="8" cy="8" r="5" fill="#f8e840"/><path d="M8 4v8M4 8h8" stroke="#107020" stroke-width="2.500"/></svg>
<svg class="i" viewBox="0 0 16 16"><path d="M1 5h3l4-4v14l-4-4H1z" fill="#eee" stroke="#556"/><path d="M10 5q2 3 0 6M12 3q4 5 0 10" fill="none" stroke="#fff"/></svg>
<svg class="i" viewBox="0 0 16 16"><path d="M1.500 11v4M4.500 9v6M7.500 7v8M10.500 4.500V15M13.500 2v13" stroke="#fff" stroke-width="2"/></svg>
<time>PM 4:03<br>2018/1/25 星期四</time><button class="showdesk" aria-label="显示桌面"></button></div>
</div>

<div class="ball">57</div>
<div class="speed"><div class="rates"><p><b class="u">↑</b><span>0<small>K/s</small></span></p><p><b class="d">↓</b><span>0<small>K/s</small></span></p></div><div class="gauge"><svg viewBox="0 0 58 58"><path d="M29 4A25 25 0 1 1 10 46" fill="none" stroke="url(#gArc)" stroke-width="2"/></svg>62<small>%</small></div></div>
</body>
</html>
```
FILE: styles.css
```css
* { box-sizing: border-box; }
body { margin: 0; height: 100vh; display: flex; flex-direction: column; overflow: hidden; background: #f0f0f0; color: #000; font: 12px/16px "Noto Sans", "Noto Sans CJK SC", sans-serif; position: relative; }
button, select, input { font: inherit; color: inherit; margin: 0; }
button { border: 0; background: none; padding: 0; white-space: nowrap; display: flex; align-items: center; gap: 4px; }
h1, h2, p, ul { margin: 0; padding: 0; font-weight: 400; }
.defs { position: absolute; width: 0; height: 0; }
.i { width: 16px; height: 16px; flex: none; display: block; }
.song { font-family: "Liberation Serif", "Noto Sans CJK SC", serif; }
.dd { width: 0; height: 0; border: 4px solid transparent; border-top: 5px solid #000; border-bottom: 0; flex: none; }
.sep { width: 1px; height: 22px; background: #80848c; flex: none; }

.titlebar { height: 22px; flex: none; display: flex; align-items: center; gap: 5px; background: linear-gradient(90deg, #b4d8ee, #a4d0ea 20%, #84c0e4 30%, #82c4ea 48%, #6aaed6 60%, #8accf2 68%, #78b8de 85%, #7cc0ec); border-bottom: 1px solid #40586c; }
.titlebar h1 { font-size: 12px; line-height: 20px; flex: 1; }
.wctl { display: flex; align-self: flex-start; height: 18px; margin-right: 3px; border: 1px solid #3c5870; border-top: 0; border-radius: 0 0 5px 5px; overflow: hidden; }
.wctl button { width: 27px; justify-content: center; border-right: 1px solid #4c6c84; background: linear-gradient(#c8dcea 45%, #88a8c0 50%, #a8c8dc); }
.wctl .close { width: 47px; border: 0; background: linear-gradient(#e0a090 45%, #b83018 50%, #d86048); }
.wctl svg { width: 14px; height: 12px; }

.menubar, .toolbar { display: flex; flex: none; }
.menubar { height: 27px; justify-content: space-between; background: linear-gradient(#fdfdff, #e8ebf6 8px, #d3d9ed 9px, #d3d9ed); }
.toolbar { height: 29px; gap: 528px; background: linear-gradient(#d3d9ed, #e0e5f5); border-bottom: 1px solid #b0b4c4; }
.bar { display: flex; align-items: center; gap: 7px; padding: 0 5px 0 10px; position: relative; border-right: 1px solid #b8bcc8; border-bottom: 1px solid #c8ccd4; border-top: 1px solid #fff; white-space: nowrap; flex: none; }
.bar::before { content: ""; position: absolute; left: 2px; top: 3px; bottom: 3px; border-left: 2px dotted #a8acb8; }
.menus { gap: 11px; padding-left: 13px; }
.menus button { gap: 3px; }
.menus button:last-child { margin-left: -4px; }
.account { border-left: 1px solid #f4f6fc; gap: 8px; }
.account button { gap: 3px; }
.file { gap: 9px; padding: 0 3px 0 10px; }
.file button { gap: 3px; }
.file .blue { color: #7090d8; }
.redo { color: #b0b4c0; }
.redo .i { transform: scaleX(-1); }
.redo .dd { border-top-color: #707480; }
.view { padding-left: 7px; gap: 5px; }
.view button { gap: 3px; }

.sel { position: relative; display: flex; height: 22px; background: #fff; }
.sel select { appearance: none; border: 0; background: none; width: 100%; padding: 0 14px 0 3px; height: 22px; border-radius: 0; color: #000; opacity: 1; }
.sel::before { content: ""; position: absolute; right: 0; top: 0; width: 13px; height: 22px; border: 1px solid #707070; background: linear-gradient(#f4f4f4, #d8d8d8); }
.sel::after { content: ""; position: absolute; right: 3px; top: 10px; border: 4px solid transparent; border-top-color: #000; border-bottom: 0; border-left-width: 3px; border-right-width: 4px; }
.w54 { width: 56px; } .w66 { width: 66px; } .w80 { width: 79px; }
.dis { background: #f4f4f4; }
.dis select { color: #6d6d6d; }
.dis::before { border-color: #bbb; }
.dis::after { border-top-color: #888; }

.work { flex: 1; min-height: 0; display: flex; gap: 4px; }
.nav, .parts, .sheets { display: flex; flex-direction: column; padding: 2px 0 1px; flex: none; }
.nav { width: 253px; } .parts { width: 211px; } .sheets { width: 303px; }
.ptitle { height: 16px; font: 13px/14px "Liberation Serif", "Noto Sans CJK SC", serif; display: flex; align-items: center; border: 1px solid #8c8c8c; border-radius: 2px; flex: none; margin-bottom: 1px; }
.ptitle.on { background: #0054e3; color: #fff; border-color: #0054e3; }
.ptitle .pin { width: 10px; height: 12px; margin: 0 14px 0 auto; }
.ptitle .px { width: 10px; height: 10px; margin-right: 3px; }
.ptitle.second { margin-top: 7px; }
.module { height: 22px; flex: none; justify-content: center; border: 1px solid #9a9a9a; border-top-color: #fff; border-left-color: #fff; background: #f0f0f0; }
.treebar { height: 26px; flex: none; margin: 1px 1px 0 2px; display: flex; align-items: center; gap: 8px; padding-left: 5px; background: linear-gradient(#fbfcff, #e6e9f5 30%, #d0d6ec 35%, #dde2f2); }
.treebar button { width: 15px; height: 15px; border: 1px solid #a8b8e0; background: #e0e8f8; justify-content: center; }
.treebar svg { width: 12px; height: 12px; flex: none; }
.tree { flex: 1; min-height: 0; overflow: hidden; margin: 0 1px 1px 2px; border: 1px solid #828790; background: #fff; padding-top: 1px; list-style: none; }
.tree ul { list-style: none; position: relative; margin-left: 31px; }
.tree ul::before { content: ""; position: absolute; left: 0; top: 0; bottom: 8px; border-left: 1px dotted #808080; }
.tree ul.thru::after { content: ""; position: absolute; left: -19px; top: 0; bottom: 0; border-left: 1px dotted #808080; }
.tree span { display: flex; align-items: center; height: 16px; gap: 5px; padding-left: 23px; position: relative; line-height: 16px; }
.tree span::before { content: ""; position: absolute; left: 20px; top: 8px; width: 4px; border-top: 1px dotted #808080; }
.shut > span::after { content: ""; position: absolute; left: 11px; top: 5px; width: 5px; height: 8px; background: #9a9a9a; clip-path: polygon(0 0, 100% 50%, 0 100%, 0 0, 1px 2px, 1px 6px, 4px 4px, 1px 2px); }
.open > span::after { content: ""; position: absolute; left: 10px; top: 5px; border: 3px solid #303030; border-top-color: transparent; border-left-color: transparent; }
.tree ul li { display: flex; align-items: center; height: 16px; gap: 4px; padding-left: 11px; position: relative; line-height: 16px; }
.tree ul li::before { content: ""; position: absolute; left: 0; top: 8px; width: 10px; border-top: 1px dotted #808080; }
.cur b { font-weight: 400; display: flex; gap: 4px; padding: 0 4px 0 1px; margin-left: -1px; background: #f4f4f4; border-radius: 3px; box-shadow: 0 0 0 1px #dcdcdc; }

.ptools { height: 26px; display: flex; align-items: center; gap: 8px; padding-left: 4px; background: linear-gradient(#fbfcff, #e6e9f5 35%, #d3d9ec 40%, #dde2f2); border-bottom: 1px solid #c4c8d4; }
.ptools button { gap: 3px; }
.ptools .dd, .account .dd { border-width: 4px 3px 0; }
.search { display: flex; height: 26px; padding: 1px 0 2px 1px; border-bottom: 1px solid #a0a0a0; background: #f4f4f4; }
.search input { flex: 1; min-width: 0; border: 1px solid #e0e0e0; background: #fff; padding: 0 2px; }
.search input::placeholder { color: #808080; opacity: 1; }
.search button { padding: 0 4px; }
.gridbox { border: 1px solid #888c94; border-right-width: 2px; border-bottom-width: 2px; background: #fff; overflow: hidden; display: flex; justify-content: space-between; align-items: flex-start; }
.list { margin-top: 2px; height: 364px; padding: 1px; }
.fill { flex: 1; padding: 1px 2px; margin-top: 1px; min-height: 0; }
.grid { border-collapse: separate; border-spacing: 0; table-layout: fixed; line-height: 16px; }
.grid th, .grid td { padding: 0; height: 19px; border: 0 solid #b8b8b8; border-width: 0 1px 1px 0; font-weight: 400; white-space: nowrap; overflow: hidden; }
.grid th { background: linear-gradient(90deg, #fdfdfd, #ececec); text-align: center; }
.grid thead th { background: linear-gradient(#fdfdfd, #eee); }
.grid thead .hot { background: linear-gradient(#fad8a0, #f0be60); color: #5c0050; }
.comps th:first-child { width: 27px; } .comps .hot { width: 163px; }
.comps thead th { height: 21px; }
.comps td { padding-left: 19px; }
.grid .pick th, .grid .edit th { background: #ffd08a; color: #5c0050; }
.pick td, .grid .lit { background: #e0efff; }
.scroll { width: 15px; align-self: stretch; background: #f0f0f0; display: flex; flex-direction: column; align-items: center; justify-content: space-between; padding: 7px 0; flex: none; position: relative; }
.up, .scroll .down { width: 0; height: 0; border: 3px solid transparent; }
.up { border-top-width: 0; border-bottom: 4px solid #404040; }
.scroll .down { border-bottom-width: 0; border-top: 4px solid #404040; }
.thumb { position: absolute; left: 1px; right: 1px; border: 1px solid #909090; border-radius: 2px; background: linear-gradient(90deg, #f4f4f4, #d0d0d0 60%, #b8b8b8); }
.thumb::after { content: ""; position: absolute; left: 3px; top: calc(50% - 4px); width: 7px; height: 8px; background: repeating-linear-gradient(#606060 0 1px, #eee 1px 3px); }
.low .thumb { top: 35%; bottom: 18px; }
.high .thumb { top: 18px; bottom: 16%; }
.props thead th { height: 21px; text-align: left; padding-left: 2px; }
.props th:nth-child(1) { width: 84px; } .props th:nth-child(2) { width: 64px; } .props th:nth-child(3) { width: 31px; }
.props td { height: 21px; padding-left: 2px; }
.props td:first-child { padding-left: 20px; }
.props .grp td { height: 19px; }
.key td:first-child { color: #0000e8; }
.off td { color: #808080; }
.tog { display: inline-flex; justify-content: center; width: 12px; height: 12px; border: 2px solid #b0b0b0; background: #f4f4f4; font: 12px/8px "Liberation Mono", monospace; vertical-align: 1px; overflow: hidden; }
.grp .tog { margin: 0 6px 0 -18px; }
input[type=checkbox] { appearance: none; width: 13px; height: 13px; border: 1px solid #8e8f8f; background: linear-gradient(135deg, #d0d4d8, #fcfcfc) content-box; padding: 1px; display: block; flex: none; position: relative; }
input[type=checkbox]:checked::after { content: ""; position: absolute; left: 3px; top: 0; width: 4px; height: 8px; border: solid #3858a0; border-width: 0 2px 2px 0; transform: rotate(40deg); }

.center { flex: 1; min-width: 0; display: flex; flex-direction: column; padding-top: 1px; }
.row { display: flex; height: 28px; flex: none; gap: 1px; }
.row .bar { gap: 8px; border-color: #fff #c8c8c8 #c8c8c8 #fff; }
.row .bar button { gap: 3px; }
.row .pickbar { gap: 6px; padding-right: 4px; }
.bar button.down { height: 22px; border: 1px solid #505050; border-radius: 3px; padding: 0 3px; background: linear-gradient(#d4d4d4, #ececec); box-shadow: inset 1px 1px 1px #888; }
.bar.pickbar button.down { padding: 0 2px; }
.pickbar button.down + button.down { margin-left: -6px; }
.row .draw { padding-left: 8px; gap: 7px; }
.draw .down + .dd { margin-left: -6px; }
.row .draw .dd { border-width: 4px 3px 0; }
.draw > .dd + .sep { margin-left: -4px; }
.push { margin-left: auto; }
.push button { color: #808080; }
.stage { flex: 1; min-height: 0; display: flex; }
.vbar { width: 27px; flex: none; display: flex; flex-direction: column; align-items: center; padding-top: 6px; border-right: 1px solid #d0d0d0; position: relative; }
.vbar::before { content: ""; position: absolute; top: 2px; left: 4px; right: 4px; border-top: 2px dotted #b0b0b0; }
.vbar button { height: 22px; flex: none; }
.vbar .t { width: 16px; height: auto; padding: 4px 2px 3px; flex-direction: column; gap: 3px; white-space: normal; word-break: break-all; line-height: 12px; color: #707478; font-family: "Noto Sans CJK SC", sans-serif; }
.vbar .t .i { margin: 0 -2px; }
.vbar .t i { border: 3px solid transparent; border-right: 4px solid #707070; border-left: 0; height: 0; }
.vbar hr { width: 19px; height: 1px; margin: 2px 0 3px; border: 0; background: #909090; flex: none; }
.drawing { flex: 1; min-width: 0; width: 100%; height: 100%; background: #000; display: block; overflow: hidden; }
.axis { fill: #e8e8e8; font: 17px "Noto Sans", sans-serif; text-anchor: middle; }
.tag { fill: #703c80; font: 66px "Noto Sans", "Open Sans", sans-serif; }
.room { fill: #ff0000; font: 76px "Noto Sans CJK SC", sans-serif; }
.dim { fill: #fff; stroke: #fff; stroke-width: 1px; font: 78px "Noto Sans", "Open Sans", sans-serif; }
.foot { height: 30px; gap: 64px; border-bottom: 1px solid #a8a8a8; }
.row .offs { color: #6d6d6d; gap: 4px; }
.num { display: flex; align-items: center; gap: 4px; position: relative; }
.num input { width: 56px; height: 20px; border: 1px solid #fafafa; background: #f0f0f0; text-align: right; padding: 0 17px 0 0; color: #6d6d6d; }
.num i { position: absolute; right: 1px; top: 1px; width: 13px; height: 18px; border: 1px solid #c0c0c0; background: linear-gradient(#c0c0c0, #c0c0c0) 0 8px / 100% 1px no-repeat; }
.num i::before, .num i::after { content: ""; position: absolute; left: 3px; border: 3px solid transparent; }
.num i::before { top: 2px; border-top: 0; border-bottom-color: #909090; }
.num i::after { bottom: 2px; border-bottom: 0; border-top-color: #909090; }
.num.wide input { width: 66px; }
.chk { display: flex; align-items: center; gap: 6px; color: #000; }
.row .snap { gap: 6px; }
.snap .down + .down { margin-left: -6px; }
.row .snap .down { padding: 0 3px; }

.tabs { display: flex; align-items: flex-end; height: 20px; flex: none; }
.tabs button { height: 18px; padding: 0 4px; border: 1px solid #808488; border-bottom: 0; background: linear-gradient(#f4f4f4, #d4d4d4); }
.tabs .sel-tab { height: 20px; padding: 0 7px; background: #fff; }
.tabbox { border: 1px solid #8c9098; background: #fff; height: 497px; flex: none; padding: 3px 2px 2px 4px; margin-right: 2px; }
.sheetbar { display: flex; height: 24px; background: #f8f8f8; border-bottom: 1px solid #a0a0a0; }
.sheetbar button { border: 1px solid #a0a0a0; border-left-color: #fff; background: #f0f0f0; padding: 0 4px; }
.sheetbar .ar { padding: 0; } .sheetbar .ar .dd { border-width: 4px 3px 0; }
.sheetbar .more { margin-left: auto; padding: 0 1px; align-items: flex-start; font-size: 14px; border-left-color: #a0a0a0; }
.files { height: 464px; margin-top: 3px; padding: 0; }
.sheet th:nth-child(1) { width: 21px; } .sheet .hot { width: 151px; } .sheet th:nth-child(3) { width: 56px; }
.sheet thead th { height: 25px; }
.sheet td { background: #ffff00; padding-left: 2px; }
.sheet td:nth-child(2) { padding-left: 30px; position: relative; }
.sheet td:nth-child(2)::before { content: ""; position: absolute; left: 8px; top: 0; bottom: 0; border-left: 1px solid #b8b8b8; }
.sheet td:nth-child(2)::after { content: ""; position: absolute; left: 8px; top: 9px; width: 17px; border-top: 1px solid #b8b8b8; }
.sheet .end td:nth-child(2)::before { bottom: 9px; }
.sheet .root td { background: #fff; }
.sheet .root td:nth-child(2) { padding-left: 3px; }
.sheet .root td:nth-child(2)::before, .sheet .root td:nth-child(2)::after, .sheet .edit td:nth-child(2)::before, .sheet .edit td:nth-child(2)::after { display: none; }
.root .tog { margin-right: 5px; }
.sheet .edit td:nth-child(2) { background: #ffff66; padding-left: 4px; box-shadow: inset 0 0 0 2px #000; }
.layers { flex: 1; border: 1px solid #8c9098; background: #fff; padding-top: 2px; }
.layers label { display: flex; align-items: center; height: 16px; gap: 3px; padding-left: 12px; }
.layers label i { width: 5px; height: 8px; margin-right: 6px; background: #9a9a9a; clip-path: polygon(0 0, 100% 50%, 0 100%, 0 0, 1px 2px, 1px 6px, 4px 4px, 1px 2px); }

.status { height: 22px; flex: none; display: flex; background: #f0ecea; border-top: 1px solid #909090; line-height: 21px; }
.status span { border-right: 1px solid #d4d0ce; padding-left: 1px; white-space: nowrap; }
.s1 { width: 150px; } .s2 { width: 80px; } .s3 { width: 130px; } .s4 { width: 50px; } .s5 { width: 250px; } .s6 { flex: 1; } .s7 { width: 70px; margin-right: 150px; }
.taskbar { height: 40px; flex: none; display: flex; align-items: center; border-top: 1px solid #203c54; box-shadow: inset 0 1px #9cc0d8; color: #fff; background: linear-gradient(90deg, #5585a8, #5c90b4 30%, #84909c 33%, #6c90ac 38%, #4c82a8 45%, #6496ba 62%, #4c80a8 75%, #6892b0 82%, #8c7488 84%, #7c848c 90%, #5888ac 93%, #4e80a6); }
.orb { margin-left: 8px; } .orb svg { width: 37px; height: 37px; }
.quick svg { width: 30px; height: 32px; } .quick { margin-left: 24px; }
.quick + .quick svg { width: 40px; height: 34px; } .quick + .quick { margin-left: 27px; }
.dots { width: 8px; height: 30px; flex: none; background: radial-gradient(circle, #1c3850 1px, transparent 1px) 0 0 / 3px 4px; }
.quick + .dots { margin: 0 9px 0 11px; }
.task { width: 159px; height: 38px; margin-right: 3px; padding-left: 9px; gap: 4px; border: 1px solid #1f3c54; border-radius: 3px; box-shadow: inset 0 0 0 1px #a8c8dc; background: linear-gradient(165deg, #9cbcd0, #6a98b8 45%, #4c7c9c 50%, #5a8cb0); }
.task.active { background: linear-gradient(165deg, #c8dce8, #a4c4d8 45%, #84acc8 50%, #9cc0d4); }
.task svg { width: 32px; height: 32px; flex: none; }
.tray { margin-left: auto; display: flex; align-items: center; height: 100%; gap: 8px; }
.desk { margin: 0 -1px 0 -2px; } .lib { display: flex; gap: 4px; margin-bottom: 8px; }
.chev { margin: -18px 2px 0 186px; font-size: 16px; }
.mini { width: 10px; height: 24px; flex: none; }
.tray .mini { margin: -6px 2px 0 1px; }
.tray time { line-height: 18px; text-align: center; width: 112px; white-space: nowrap; }
.showdesk { width: 15px; height: 39px; border: 1px solid #26455e; background: linear-gradient(135deg, #a0c4dc, #5a8cb0); margin-left: -6px; }

.ball { position: absolute; right: -27px; top: 774px; width: 46px; height: 46px; border-radius: 50%; background: #35c065; border: 2px solid #a0e0b4; color: #fff; font-size: 14px; line-height: 42px; padding-left: 3px; }
.speed { position: absolute; right: 2px; top: 892px; display: flex; align-items: center; }
.rates { width: 90px; height: 43px; margin-right: -30px; border-radius: 21px 0 0 21px; background: #32353f; color: #fff; padding-left: 10px; }
.rates p { display: flex; height: 21px; align-items: center; gap: 15px; line-height: 20px; }
.rates p + p { border-top: 1px solid #23252c; }
.rates small { color: #9a9ca4; font-size: 10px; }
.rates b { width: 8px; } .u { color: #40b0f0; } .d { color: #38b838; }
.gauge { position: relative; width: 58px; height: 60px; border-radius: 50%; background: #555866; border: 1px solid #484b56; color: #fff; font: 24px/58px "Open Sans", sans-serif; font-weight: 300; text-align: center; white-space: nowrap; }
.gauge small { font-size: 11px; }
.gauge svg { position: absolute; inset: 0; }
```
